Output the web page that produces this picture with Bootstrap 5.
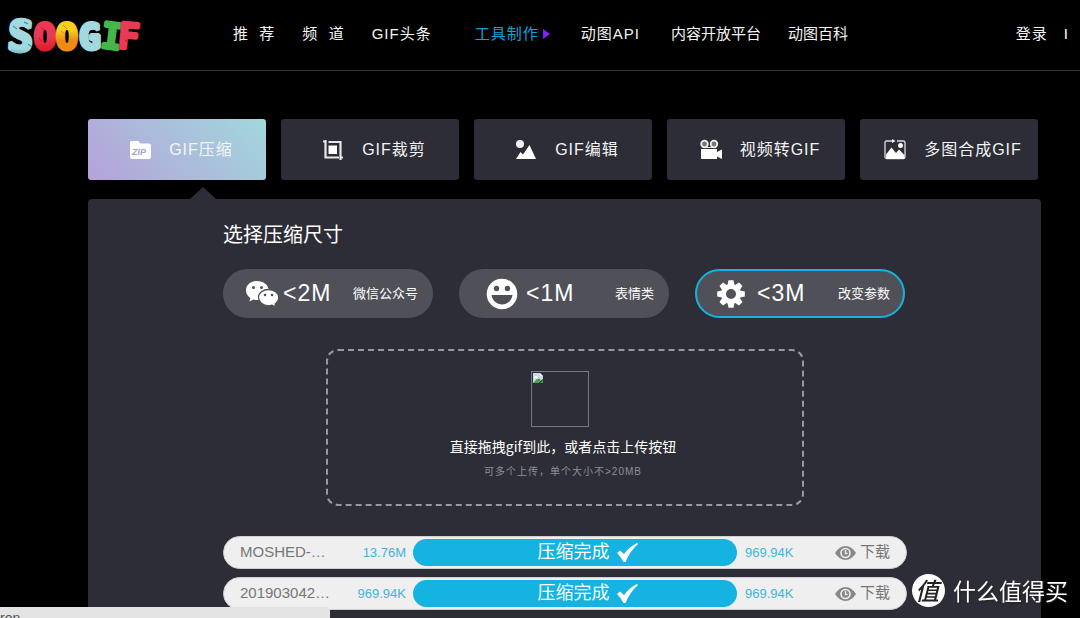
<!DOCTYPE html>
<html lang="zh-CN">
<head>
<meta charset="utf-8">
<meta name="viewport" content="width=device-width, initial-scale=1">
<title>SOOGIF - GIF压缩</title>
<link href="https://cdn.jsdelivr.net/npm/bootstrap@5.3.0/dist/css/bootstrap.min.css" rel="stylesheet">
<style>
  :root { --panel: #2c2d36; --accent: #14b3e1; }
  body { background: #000; color: #fff; font-family: "Liberation Sans", "Noto Sans CJK SC", sans-serif; font-size: 15px; overflow-x: hidden; }
  .site-header { border-bottom: 1px solid #333; height: 71px; padding: 0 11px 2px 6px; white-space: nowrap; }
  .brand-logo { width: 134px; height: 46px; overflow: visible; }
  .site-nav { gap: 27px; margin-left: 93px; }
  .site-nav a, .site-user a { color: #f4f4f4; text-decoration: none; }
  .spaced { letter-spacing: 1px; }
  .site-nav .current { color: #0ba5dc; padding: 0 4px 0 16px; }
  .current-arrow { width: 7px; height: 12px; }
  .page-main { padding: 48px 39px 0 88px; }
  .tool-tabs { display: grid; grid-template-columns: repeat(5, 1fr); gap: 15px; margin-right: 3px; }
  .tool-tab { height: 61px; background: var(--panel); color: #f4f4f4; border: 0; border-radius: 3px; font-size: 16px; letter-spacing: 1px; padding: 0 0 0 8px; gap: 18px; }
  .tool-tab.chosen { background: linear-gradient(45deg, #b5a1da, #a1d8dc); }
  .tool-tab svg { width: 22px; height: 22px; }
  .tool-panel { background: var(--panel); border-radius: 4px 4px 0 0; margin-top: 19px; padding: 21px 134px 0 135px; }
  .tool-panel::before { content: ""; position: absolute; left: 102px; top: -12px; border: solid transparent; border-width: 0 13px 12px; border-bottom-color: var(--panel); }
  .panel-title { font-size: 20px; line-height: 30px; margin-bottom: 19px; font-weight: 400; }
  .size-options { gap: 26px; padding-right: 2px; }
  .size-option { flex: 1; height: 49px; background: #505158; color: #fff; border: 2px solid #505158; padding: 0 13px 0 20px; }
  .size-option.chosen { border-color: var(--accent); }
  .size-value { font-size: 23px; letter-spacing: 1px; }
  .size-note { font-size: 13px; }
  .drop-zone { width: 70%; height: 157px; margin: 31px auto 30px; border: 2px dashed #999; border-radius: 12px; cursor: pointer; padding: 20px 4px 0 0; }
  .missing-picture { width: 58px; height: 56px; border: 1px solid #777880; margin: 0 6px 8px 0; }
  .drop-title { font-family: "Noto Sans CJK SC", sans-serif; font-size: 14px; line-height: 22px; }
  .drop-hint { font-size: 10px; line-height: 14px; color: #8f9095; letter-spacing: 1px; margin-top: 8px; }
  .file-row { height: 33px; background: #efefef; border: 1px solid #d0d0d2; color: #777; padding: 0 16px; margin-bottom: 8px; }
  .file-name { width: 92px; }
  .file-size { width: 74px; font-size: 13px; color: #42b3df; }
  .file-progress { height: 27px; background: var(--accent); font-size: 18px; margin: 0 8px 0 7px; padding-left: 26px; }
  .file-download { color: #777; text-decoration: none; }
  .status-tip { width: 330px; height: 11px; background: #e4e4e4; color: #555; font-size: 14px; line-height: 22px; border-radius: 0 3px 0 0; }
  .watermark { right: 12px; bottom: 11px; gap: 8px; font-family: "Noto Sans CJK SC", sans-serif; font-size: 23px; line-height: 34px; text-shadow: 1px 1px 2px #222; }
  .watermark-seal { width: 33px; height: 33px; background: #fff; color: #222; font-size: 24px; font-weight: 500; font-style: italic; text-shadow: none; padding-right: 3px; }
</style>
</head>
<body class="min-vh-100 d-flex flex-column">
<header class="site-header d-flex align-items-center">
  <a href="#" aria-label="SOOGIF">
    <svg class="brand-logo d-block" viewBox="0 0 134 46">
      <defs>
        <linearGradient id="ice" x1="0" y1="0" x2="0" y2="1"><stop offset=".75" stop-color="#a2d9df"/><stop offset="1" stop-color="#2c8aa4"/></linearGradient>
        <linearGradient id="rose" x1="0" y1="0" x2="0" y2="1"><stop offset=".5" stop-color="#e83a55"/><stop offset=".8" stop-color="#dc1f2b"/></linearGradient>
        <linearGradient id="sun" x1="0" y1="0" x2="0" y2="1"><stop offset=".35" stop-color="#f7cf20"/><stop offset=".6" stop-color="#ef8a18"/></linearGradient>
      </defs>
      <g font-family="DejaVu Sans Mono, monospace" font-weight="700" font-size="36" stroke-width="4" stroke-linejoin="bevel">
        <text x="2" y="40" font-size="42" fill="url(#ice)" stroke="url(#ice)" transform="rotate(4 15 26)">S</text>
        <text x="28" y="38" fill="url(#rose)" stroke="url(#rose)">O</text>
        <text x="50" y="38" fill="url(#sun)" stroke="url(#sun)">O</text>
        <text x="73" y="38" fill="#a2d9df" stroke="#a2d9df">G</text>
        <text x="95" y="38" fill="#45b649" stroke="#45b649" stroke-width="3" transform="rotate(7 106 26)">I</text>
        <text x="112" y="38" fill="#e83a55" stroke="#e83a55" stroke-width="3" transform="rotate(5 122 26)">F</text>
      </g>
      <g stroke="#1c7d97" stroke-width="1" fill="none"><path d="M7 15l4 3M18 11l4 2M22 33l4 3"/><path stroke="#c9142b" d="M35 16l3 3M33 27l3 4M119 29l3 2"/><path stroke="#ef8a18" d="M57 14l4 4M55 20l4 3"/></g>
    </svg>
  </a>
  <nav class="site-nav d-flex align-items-center" aria-label="主导航">
    <a class="spaced" href="#">推&nbsp;&nbsp;荐</a>
    <a class="spaced" href="#">频&nbsp;&nbsp;道</a>
    <a class="spaced" href="#">GIF头条</a>
    <a class="spaced current d-flex align-items-center gap-1" href="#">工具制作<svg class="current-arrow" viewBox="0 0 7 12" aria-hidden="true"><path d="M0 1l7 5-7 5z" fill="#8120ff"/></svg></a>
    <a class="spaced pe-1" href="#">动图API</a>
    <a href="#">内容开放平台</a>
    <a href="#">动图百科</a>
  </nav>
  <div class="site-user d-flex ms-auto gap-3 spaced"><a href="#">登录</a><span>I</span></div>
</header>

<main class="page-main flex-fill d-flex flex-column">
  <div class="tool-tabs">
    <button type="button" class="tool-tab chosen d-flex align-items-center justify-content-center">
      <svg viewBox="0 0 22 22" aria-hidden="true"><path fill="#fff" d="M1 3.500q0-1.500 1.500-1.500h7l2 2.500h8.500q2 0 2 2v11.500q0 2-2 2H3q-2 0-2-2z"/><text x="3" y="15.500" font-family="Liberation Sans" font-size="9" font-weight="700" font-style="italic" letter-spacing="0" fill="#a3a5d2">ZIP</text></svg>GIF压缩
    </button>
    <button type="button" class="tool-tab d-flex align-items-center justify-content-center">
      <svg viewBox="0 0 22 22" aria-hidden="true"><path fill="none" stroke="#e6e6e8" stroke-width="2.200" d="M3.500 1v17.500H17M6.500 3h12v18M1 2.500h3M18 18.500h3"/><rect x="6.500" y="6.500" width="8.500" height="8.500" fill="#fff"/></svg>GIF裁剪
    </button>
    <button type="button" class="tool-tab d-flex align-items-center justify-content-center">
      <svg viewBox="0 0 22 22" aria-hidden="true"><circle cx="5" cy="5" r="4" fill="#f5f5f5"/><path fill="#fff" d="M1 20l4.500-7 2.500 2.500L14.500 6 21 20z"/></svg>GIF编辑
    </button>
    <button type="button" class="tool-tab d-flex align-items-center justify-content-center">
      <svg viewBox="0 0 22 22" aria-hidden="true"><g fill="#777" stroke="#eee" stroke-width="1.800"><circle cx="4.500" cy="5" r="3.300"/><circle cx="14" cy="5" r="3.300"/></g><path stroke="#eee" d="M4 8.500h10"/><path fill="#fff" d="M1 10h16v3l5-2.500v9.500l-5-2.500V20H1z"/></svg>视频转GIF
    </button>
    <button type="button" class="tool-tab d-flex align-items-center justify-content-center">
      <svg viewBox="0 0 22 22" aria-hidden="true"><path fill="none" stroke="#ddd" stroke-width="1.300" d="M10 2H2.500Q1 2 1 3.500V18q0 1.500 1.500 1.500h17q1.500 0 1.500-1.500V3.500Q21 2 19.500 2H13"/><path fill="#fff" d="M8 0l3.500 2L8 4zM2 15.500l5.500-7 4.500 5.500 3-3.500 5.500 5.500V20H2z"/><circle cx="16.500" cy="6.500" r="2.500" fill="#fff"/></svg>多图合成GIF
    </button>
  </div>

  <section class="tool-panel position-relative flex-fill">
    <h1 class="panel-title">选择压缩尺寸</h1>
    <div class="size-options d-flex">
      <button type="button" class="size-option rounded-pill d-flex align-items-center">
        <svg width="34" height="28" viewBox="0 0 34 28" aria-hidden="true"><path fill="#fff" d="M12 1C5.500 1 1 5 1 10.500c0 3.300 1.700 5.700 4.300 7.500L4.500 21.500l4-2c5 1.500 15 .5 15.500-9C23.500 5 18.500 1 12 1z"/><path fill="#fff" stroke="#505158" stroke-width="1.300" d="M23.500 9.500c-5.500 0-10 3.500-10 8s4.500 8.300 10 8.300c1.300 0 2.500-.3 3.500-.6l4 2-1-3.200c2.200-1.500 3.700-3.700 3.700-6.500 0-4.500-4.700-8-10.200-8z"/><g fill="#505158"><circle cx="8.500" cy="7.500" r="1.500"/><circle cx="16.500" cy="7.500" r="1.500"/><circle cx="20" cy="15" r="1.300"/><circle cx="27" cy="15" r="1.300"/></g></svg>
        <span class="size-value ms-1">&lt;2M</span><span class="size-note ms-auto">微信公众号</span>
      </button>
      <button type="button" class="size-option rounded-pill d-flex align-items-center">
        <svg class="ms-1" width="33" height="32" viewBox="0 0 33 32" aria-hidden="true"><circle cx="17" cy="16" r="15.300" fill="#fff"/><g fill="#505158"><circle cx="11.500" cy="10.500" r="2.700"/><circle cx="22.500" cy="10.500" r="2.700"/><path d="M6.500 17h21c-1 6-5.500 9.500-10.500 9.500S7.500 23 6.500 17z"/></g></svg>
        <span class="size-value ms-2">&lt;1M</span><span class="size-note ms-auto">表情类</span>
      </button>
      <button type="button" class="size-option chosen rounded-pill d-flex align-items-center">
        <svg width="28" height="28" viewBox="-14 -14 28 28" aria-hidden="true"><circle r="7.500" fill="none" stroke="#fff" stroke-width="5"/><g fill="#fff"><path id="cog" d="M-3.500-9l1-4.800h5l1 4.800zM-3.500 9l1 4.800h5l1-4.800z"/><use href="#cog" transform="rotate(45)"/><use href="#cog" transform="rotate(90)"/><use href="#cog" transform="rotate(135)"/></g></svg>
        <span class="size-value ms-2 ps-1">&lt;3M</span><span class="size-note ms-auto">改变参数</span>
      </button>
    </div>

    <label class="drop-zone d-flex flex-column align-items-center" for="gif-file">
      <input class="visually-hidden" type="file" id="gif-file" accept="image/gif" multiple>
      <span class="missing-picture"><svg class="d-block" width="12" height="12" viewBox="0 0 12 12" aria-hidden="true"><path fill="#c9daf5" d="M1 1h7l3 3v3l-5 4H1z"/><path fill="#fff" d="M8 1v3h3zM2 6q0-2 2-2 2 0 2 2z"/><path fill="#42a737" d="M1 11l4-4q3-1 4 1l-3 3zM11 8v3H8z"/></svg></span>
      <span class="drop-title">直接拖拽gif到此，或者点击上传按钮</span>
      <span class="drop-hint">可多个上传，单个大小不&gt;20MB</span>
    </label>

    <div class="file-row rounded-pill d-flex align-items-center">
      <span class="file-name">MOSHED-…</span><span class="file-size text-end">13.76M</span>
      <div class="file-progress rounded-pill flex-fill d-flex align-items-center justify-content-center gap-2 text-white">压缩完成<svg width="21" height="19" viewBox="0 0 21 19" aria-hidden="true"><path fill="#fff" d="M0 10l3-2.500 4 3.500Q12 4 20 0l1 1Q13 8 8.500 19H6.500Q4 14 0 10z"/></svg></div>
      <span class="file-size text-start">969.94K</span>
      <a class="file-download d-flex align-items-center gap-1 ms-3" href="#"><svg width="21" height="14" viewBox="0 0 21 14" aria-hidden="true"><path fill="#888" d="M0 7Q4.500 0 10.500 0T21 7q-4.500 7-10.500 7T0 7z"/><circle cx="10.500" cy="7" r="4.500" fill="none" stroke="#efefef" stroke-width="1.600"/><path stroke="#efefef" stroke-width="1.300" fill="none" d="M10.500 4v3.500h2"/></svg>下载</a>
    </div>
    <div class="file-row rounded-pill d-flex align-items-center">
      <span class="file-name">201903042…</span><span class="file-size text-end">969.94K</span>
      <div class="file-progress rounded-pill flex-fill d-flex align-items-center justify-content-center gap-2 text-white">压缩完成<svg width="21" height="19" viewBox="0 0 21 19" aria-hidden="true"><path fill="#fff" d="M0 10l3-2.500 4 3.500Q12 4 20 0l1 1Q13 8 8.500 19H6.500Q4 14 0 10z"/></svg></div>
      <span class="file-size text-start">969.94K</span>
      <a class="file-download d-flex align-items-center gap-1 ms-3" href="#"><svg width="21" height="14" viewBox="0 0 21 14" aria-hidden="true"><path fill="#888" d="M0 7Q4.500 0 10.500 0T21 7q-4.500 7-10.500 7T0 7z"/><circle cx="10.500" cy="7" r="4.500" fill="none" stroke="#efefef" stroke-width="1.600"/><path stroke="#efefef" stroke-width="1.300" fill="none" d="M10.500 4v3.500h2"/></svg>下载</a>
    </div>
  </section>
</main>

<div class="status-tip position-fixed bottom-0 start-0 overflow-hidden">ron</div>
<div class="watermark position-fixed d-flex align-items-center"><span class="watermark-seal rounded-circle d-flex align-items-center justify-content-center">值</span>什么值得买</div>
<script src="https://cdn.jsdelivr.net/npm/bootstrap@5.3.0/dist/js/bootstrap.bundle.min.js"></script>
</body>
</html>
